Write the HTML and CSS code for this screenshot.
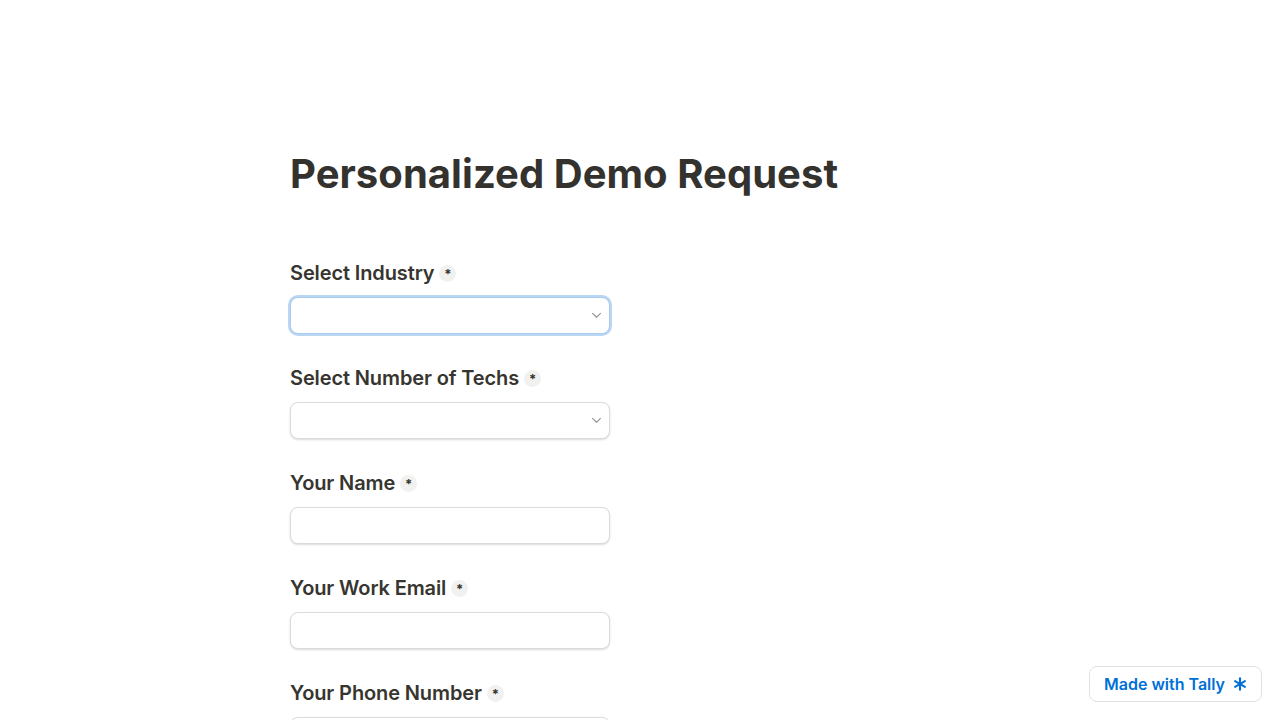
FILE: index.html
```html
<!DOCTYPE html>
<html>
<head>
<meta charset="utf-8">
<link rel="stylesheet" href="styles.css">
</head>
<body>
<main class="page">
  <h1 class="title">Personalized Demo Request</h1>
  <form class="form">
    <div class="field">
      <div class="label">Select Industry <span class="req">*</span></div>
      <div class="input select focused"><svg class="chev" viewBox="0 0 12 8" width="11" height="7"><path d="M1.5 1.5 L6 6 L10.5 1.5" fill="none" stroke="#9b9a97" stroke-width="1.4" stroke-linecap="round" stroke-linejoin="round"/></svg></div>
    </div>
    <div class="field">
      <div class="label">Select Number of Techs <span class="req">*</span></div>
      <div class="input select"><svg class="chev" viewBox="0 0 12 8" width="11" height="7"><path d="M1.5 1.5 L6 6 L10.5 1.5" fill="none" stroke="#9b9a97" stroke-width="1.4" stroke-linecap="round" stroke-linejoin="round"/></svg></div>
    </div>
    <div class="field">
      <div class="label">Your Name <span class="req">*</span></div>
      <div class="input"></div>
    </div>
    <div class="field">
      <div class="label">Your Work Email <span class="req">*</span></div>
      <div class="input"></div>
    </div>
    <div class="field">
      <div class="label">Your Phone Number <span class="req">*</span></div>
      <div class="input"></div>
    </div>
  </form>
</main>
<a class="badge">Made with Tally <svg class="star" viewBox="0 0 16 16" width="14" height="14"><g stroke="#0070d7" stroke-width="2.4" stroke-linecap="round"><path d="M8 1.5 V14.5"/><path d="M2.4 4.75 L13.6 11.25"/><path d="M2.4 11.25 L13.6 4.75"/></g></svg></a>
</body>
</html>
```
FILE: styles.css
```css
html, body {
  margin: 0;
  padding: 0;
  background: #ffffff;
  font-family: Inter, "Noto Sans", sans-serif;
  color: #37352f;
  overflow: hidden;
  height: 720px;
}
.page {
  width: 700px;
  margin: 0 auto;
  padding-top: 150px;
}
.title {
  margin: 0;
  font-size: 40px;
  line-height: 48px;
  font-weight: 700;
  letter-spacing: 0.05px;
  color: #34322e;
}
.form {
  margin-top: 60px;
  display: flex;
  flex-direction: column;
  gap: 29px;
}
.field {
  display: flex;
  flex-direction: column;
  gap: 9px;
}
.label {
  font-size: 20px;
  line-height: 30px;
  font-weight: 600;
  letter-spacing: -0.12px;
  color: #37352f;
  display: flex;
  align-items: center;
}
.req {
  display: inline-flex;
  align-items: center;
  justify-content: center;
  width: 17px;
  height: 17px;
  border-radius: 50%;
  background: #f1f1f0;
  margin-left: 5px;
  font-size: 13px;
  line-height: 1;
  padding-top: 3px;
  box-sizing: border-box;
  font-weight: 700;
  letter-spacing: 0;
}
.input {
  width: 320px;
  height: 37px;
  box-sizing: border-box;
  border: 1px solid #dcdbd8;
  border-radius: 8px;
  box-shadow: 0 1px 2px rgba(15, 15, 15, 0.15);
  background: #fff;
  display: flex;
  align-items: center;
  justify-content: flex-end;
  padding-right: 7px;
}
.input.focused {
  border-color: #a8cbee;
  box-shadow: 0 0 0 2px #b9d6f3;
}
.chev {
  display: block;
}
.badge {
  position: fixed;
  right: 18px;
  bottom: 18px;
  height: 36px;
  box-sizing: border-box;
  padding: 0 14px 0 14px;
  border: 1px solid #e3e2e0;
  border-radius: 8px;
  background: #fff;
  display: flex;
  align-items: center;
  gap: 8px;
  font-size: 16px;
  font-weight: 600;
  color: #0070d7;
}
.star { display: block; }
```
